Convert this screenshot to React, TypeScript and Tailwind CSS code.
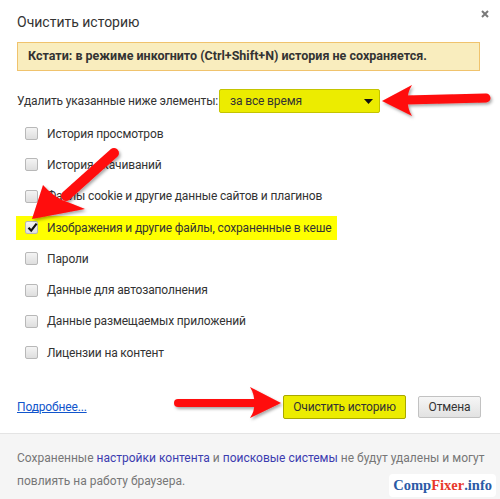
import React from "react";

const font = { fontFamily: 'Roboto, "Liberation Sans", sans-serif', letterSpacing: "-0.15px" };

function Checkbox({ checked }: { checked?: boolean }) {
  return (
    <span className="relative inline-block w-[13px] h-[13px] shrink-0 rounded-[2px] border border-[#b8b8b8] bg-gradient-to-b from-[#f4f4f4] to-[#dedede]">
      {checked && (
        <svg className="absolute left-[1px] top-[0px]" width="11" height="11" viewBox="0 0 11 11">
          <path d="M1.5 5.8 L4.2 8.6 L9.6 1.6" fill="none" stroke="#111" strokeWidth="2.2" strokeLinejoin="miter" />
        </svg>
      )}
    </span>
  );
}

const items = [
  "История просмотров",
  "История скачиваний",
  "Файлы cookie и другие данные сайтов и плагинов",
  "Изображения и другие файлы, сохраненные в кеше",
  "Пароли",
  "Данные для автозаполнения",
  "Данные размещаемых приложений",
  "Лицензии на контент",
];

export default function App() {
  return (
    <div className="relative w-[500px] h-[499px] bg-white overflow-hidden text-[#333]" style={font}>
      <div className="flex flex-col h-full">
        <div className="relative h-[42px] pl-[17px] pt-[11px]">
          <div className="text-[14px] leading-[22px] text-[#333] tracking-normal">Очистить историю</div>
          <svg className="absolute right-[11px] top-[10px]" width="8" height="8" viewBox="0 0 8 8">
            <path d="M1 1 L7 7 M7 1 L1 7" stroke="#7a7a7a" strokeWidth="2" />
          </svg>
        </div>
        <div className="ml-[17px] mr-[20px] h-[29px] flex items-center pl-[10px] bg-[#f9edbe] border border-[#f0c36d] text-[12.5px] font-bold text-[#333] whitespace-nowrap tracking-normal">
          Кстати: в режиме инкогнито (Ctrl+Shift+N) история не сохраняется.
        </div>
        <div className="mt-[18px] pl-[17px] flex items-center h-[24px] text-[12px]">
          <span>Удалить указанные ниже элементы:</span>
          <div className="ml-[1px] w-[161px] h-[24px] flex items-center justify-between pl-[10px] pr-[6px] bg-[#ecec00] border border-[#c4c400] rounded-[2px]">
            <span>за все время</span>
            <svg width="9" height="5" viewBox="0 0 9 5">
              <path d="M0 0 L9 0 L4.5 5 Z" fill="#111" />
            </svg>
          </div>
        </div>
        <div className="mt-[5px] flex flex-col">
          {items.map((t, i) => (
            <div key={t} className="h-[31.3px] flex items-center pl-[16px]">
              {i === 3 ? (
                <div className="h-[24px] flex items-center gap-[9px] pl-[9px] pr-[6px] bg-[#ffff00] text-[12px]">
                  <Checkbox checked />
                  <span>{t}</span>
                </div>
              ) : (
                <div className="flex items-center gap-[9px] pl-[9px] text-[12px]">
                  <Checkbox />
                  <span>{t}</span>
                </div>
              )}
            </div>
          ))}
        </div>
        <div className="mt-[27px] flex items-center h-[24px] pl-[17px] pr-[19px]">
          <a className="text-[12px] text-[#1155cc] underline">Подробнее...</a>
          <div className="ml-auto flex items-center gap-[12px]">
            <button className="h-[24px] w-[123px] text-[12px] text-[#333] bg-[#ecec00] border border-[#a8a800] rounded-[2px]">
              Очистить историю
            </button>
            <button className="h-[22px] w-[63px] text-[12px] text-[#333] bg-gradient-to-b from-[#f6f6f6] to-[#e2e2e2] border border-[#c2c2c2] rounded-[2px]">
              Отмена
            </button>
          </div>
        </div>
        <div className="mt-[14px] flex-1 border-t border-[#e4e4e4] bg-[#f5f5f5] pl-[17px] pr-[10px] pt-[13px] text-[12px] leading-[23px] text-[#777] tracking-normal whitespace-nowrap">
          Сохраненные <span className="text-[#3c3cb0]">настройки контента</span> и{" "}
          <span className="text-[#3c3cb0]">поисковые системы</span> не будут удалены и могут
          <br />
          повлиять на работу браузера.
        </div>
      </div>

      <div
        className="absolute right-[4px] bottom-[2px] px-[4px] h-[23px] flex items-center rounded-[4px] bg-white text-[14.5px] font-bold tracking-normal"
        style={{ fontFamily: '"Liberation Serif", "DejaVu Serif", serif' }}
      >
        <span className="text-[#2b5aa6]">Comp</span>
        <span className="text-[#e8382b]">Fixer</span>
        <span className="text-[#2b5aa6]">.info</span>
      </div>

      <svg className="absolute inset-0 pointer-events-none" width="500" height="499" viewBox="0 0 500 499">
        <defs>
          <filter id="sh" x="-20%" y="-20%" width="140%" height="140%">
            <feDropShadow dx="1.5" dy="2" stdDeviation="1.5" floodColor="#000" floodOpacity="0.35" />
          </filter>
        </defs>
        <g filter="url(#sh)" fill="#ff0a0a" stroke="#ff0a0a" strokeLinecap="round">
          <line x1="405" y1="100" x2="486" y2="98" strokeWidth="9" />
          <path d="M382 101 L412 85 Q407 93 408 100 Q407 108 412 116 Z" stroke="none" />

          <line x1="66" y1="196" x2="114" y2="153" strokeWidth="10" />
          <path d="M32 219 L43 185 Q52 195 62 200 Q73 204 85 209 Z" stroke="none" />

          <line x1="178" y1="403" x2="254" y2="403" strokeWidth="8" />
          <path d="M281 403 L250 387 Q255 395 254 403 Q255 411 250 418 Z" stroke="none" />
        </g>
      </svg>
    </div>
  );
}
